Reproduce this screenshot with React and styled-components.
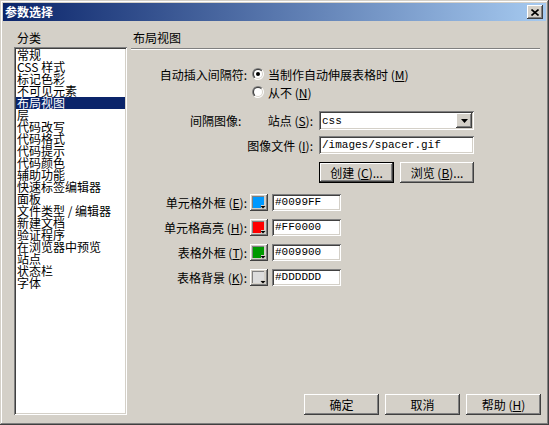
import React from 'react';
import styled, { createGlobalStyle } from 'styled-components';

const Global = createGlobalStyle`
  html, body { margin: 0; padding: 0; background: #D4D0C8; }
  body {
    font-family: "Noto Sans CJK SC", "Liberation Sans", sans-serif;
    font-size: 12px;
    color: #000;
  }
  * { box-sizing: border-box; }
  u { text-decoration: underline; text-underline-offset: 1px; }
`;

const raised = `
  box-shadow: inset -1px -1px #404040, inset 1px 1px #FFFFFF,
    inset -2px -2px #808080, inset 2px 2px #D4D0C8;
`;
const sunken = `
  box-shadow: inset 1px 1px #808080, inset -1px -1px #FFFFFF,
    inset 2px 2px #404040, inset -2px -2px #D4D0C8;
`;

const Window = styled.div`
  width: 549px;
  height: 425px;
  background: #D4D0C8;
  padding: 3px;
  display: flex;
  flex-direction: column;
  box-shadow: inset -1px -1px #404040, inset 1px 1px #D4D0C8,
    inset -2px -2px #808080, inset 2px 2px #FFFFFF;
`;

const TitleBar = styled.div`
  height: 18px;
  flex: none;
  display: flex;
  align-items: center;
  justify-content: space-between;
  padding: 0 3px 0 2px;
  background: linear-gradient(to right, #0A246A, #A6CAF0);
`;

const TitleText = styled.span`
  color: #fff;
  font-weight: bold;
  font-size: 12px;
  line-height: 14px;
`;

const CloseButton = styled.div`
  width: 16px;
  height: 14px;
  background: #D4D0C8;
  ${raised}
  display: flex;
  align-items: center;
  justify-content: center;
`;

const Client = styled.div`
  flex: 1;
  display: flex;
  padding: 10px 5px 7px 11px;
  gap: 4px;
  min-height: 0;
`;

const LeftCol = styled.div`
  width: 113px;
  flex: none;
  display: flex;
  flex-direction: column;
`;

const GroupLabel = styled.div`
  line-height: 14px;
  height: 14px;
  padding-left: ${p => p.$indent || 0}px;
`;

const ListBox = styled.div`
  margin-top: 2px;
  flex: 1;
  background: #fff;
  padding: 2px;
  ${sunken}
`;

const ListItem = styled.div`
  height: 12px;
  line-height: 12px;
  padding-left: 1px;
  white-space: pre;
  background: ${p => (p.$selected ? '#0A246A' : 'transparent')};
  color: ${p => (p.$selected ? '#fff' : '#000')};
`;

const RightCol = styled.div`
  flex: 1;
  display: flex;
  flex-direction: column;
`;

const Etched = styled.div`
  margin-top: 3px;
  margin-right: 1px;
  height: 2px;
  border-top: 1px solid #808080;
  border-bottom: 1px solid #FFFFFF;
`;

const Row = styled.div`
  display: flex;
  align-items: center;
  height: ${p => p.$h || 18}px;
  margin-top: ${p => p.$mt || 0}px;
  gap: ${p => p.$gap || 0}px;
  white-space: pre;
`;

const LabelCell = styled.div`
  width: ${p => p.$w}px;
  flex: none;
  display: flex;
  justify-content: ${p => p.$justify || 'flex-end'};
  padding-left: ${p => p.$pl || 0}px;
  white-space: pre;
`;

const RadioWrap = styled.div`
  display: flex;
  align-items: center;
  gap: 4px;
  margin-left: ${p => p.$ml || 0}px;
`;

const TextBox = styled.div`
  width: ${p => p.$w}px;
  height: ${p => p.$h}px;
  background: #fff;
  ${sunken}
  padding: 0 3px;
  display: flex;
  align-items: center;
  font-family: "Liberation Mono", "DejaVu Sans Mono", monospace;
  font-size: 11px;
  justify-content: space-between;
`;

const DropButton = styled.div`
  width: 16px;
  height: 15px;
  margin-right: -1px;
  background: #D4D0C8;
  ${raised}
  display: flex;
  align-items: center;
  justify-content: center;
`;

const Button = styled.div`
  width: ${p => p.$w || 75}px;
  height: 21px;
  background: #D4D0C8;
  display: flex;
  align-items: center;
  justify-content: center;
  white-space: pre;
  ${p =>
    p.$default
      ? `box-shadow: inset 0 0 0 1px #000, inset -2px -2px #404040, inset 2px 2px #FFFFFF, inset -3px -3px #808080;`
      : raised}
`;

const ButtonRow = styled.div`
  display: flex;
  gap: ${p => p.$gap || 6}px;
  margin-top: ${p => p.$mt || 0}px;
  margin-left: ${p => p.$ml || 0}px;
  justify-content: ${p => p.$justify || 'flex-start'};
`;

const Spacer = styled.div`
  flex: 1;
`;

const SwatchButton = styled.div`
  width: 18px;
  height: 17px;
  background: #D4D0C8;
  ${raised}
  padding: 2px;
  display: flex;
`;

const Radio = ({ checked }) => (
  <svg width="12" height="12" viewBox="0 0 12 12">
    <defs>
      <linearGradient id="rOut" x1="0" y1="0" x2="1" y2="1">
        <stop offset="0.5" stopColor="#808080" />
        <stop offset="0.5" stopColor="#FFFFFF" />
      </linearGradient>
      <linearGradient id="rIn" x1="0" y1="0" x2="1" y2="1">
        <stop offset="0.5" stopColor="#404040" />
        <stop offset="0.5" stopColor="#D4D0C8" />
      </linearGradient>
    </defs>
    <circle cx="6" cy="6" r="6" fill="url(#rOut)" />
    <circle cx="6" cy="6" r="5" fill="url(#rIn)" />
    <circle cx="6" cy="6" r="4" fill="#fff" />
    {checked && <circle cx="6" cy="6" r="2" fill="#000" />}
  </svg>
);

const Swatch = ({ color }) => (
  <SwatchButton>
    <svg width="14" height="13" viewBox="0 0 14 13">
      <path d="M0 0 H12 V9 H9 V12 H0 Z" fill="#808080" />
      <path d="M1 1 H12 V9 H9 V12 H1 Z" fill={color} />
      <path d="M8.5 10 H13.5 L11 12.5 Z" fill="#000" />
    </svg>
  </SwatchButton>
);

const items = [
  '常规', 'CSS 样式', '标记色彩', '不可见元素', '布局视图', '层', '代码改写',
  '代码格式', '代码提示', '代码颜色', '辅助功能', '快速标签编辑器', '面板',
  '文件类型 / 编辑器', '新建文档', '验证程序', '在浏览器中预览', '站点',
  '状态栏', '字体',
];

const colorRows = [
  { label: '单元格外框 ', key: 'E', color: '#0099FF', value: '#0099FF' },
  { label: '单元格高亮 ', key: 'H', color: '#FF0000', value: '#FF0000' },
  { label: '表格外框 ', key: 'T', color: '#009900', value: '#009900' },
  { label: '表格背景 ', key: 'K', color: '#DDDDDD', value: '#DDDDDD' },
];

export default function App() {
  return (
    <>
      <Global />
      <Window>
        <TitleBar>
          <TitleText>参数选择</TitleText>
          <CloseButton>
            <svg width="8" height="7" viewBox="0 0 8 7">
              <path d="M0.5 0.5 L7.5 6.5 M7.5 0.5 L0.5 6.5" stroke="#000" strokeWidth="1.6" />
            </svg>
          </CloseButton>
        </TitleBar>
        <Client>
          <LeftCol>
            <GroupLabel $indent={3}>分类</GroupLabel>
            <ListBox>
              {items.map((t, i) => (
                <ListItem key={t} $selected={i === 4}>{t}</ListItem>
              ))}
            </ListBox>
          </LeftCol>
          <RightCol>
            <GroupLabel $indent={2}>布局视图</GroupLabel>
            <Etched />
            <Row $h={16} $mt={16}>
              <LabelCell $w={116}>自动插入间隔符:</LabelCell>
              <RadioWrap $ml={5}>
                <Radio checked />
                <span>当制作自动伸展表格时 (<u>M</u>)</span>
              </RadioWrap>
            </Row>
            <Row $h={16} $mt={2}>
              <LabelCell $w={116} />
              <RadioWrap $ml={5}>
                <Radio />
                <span>从不 (<u>N</u>)</span>
              </RadioWrap>
            </Row>
            <Row $h={19} $mt={11} $gap={6}>
              <LabelCell $w={182} $pl={59} $justify="space-between">
                <span>间隔图像:</span>
                <span>站点 (<u>S</u>):</span>
              </LabelCell>
              <TextBox $w={155} $h={19}>
                <span>css</span>
                <DropButton>
                  <svg width="7" height="4" viewBox="0 0 7 4">
                    <path d="M0 0 H7 L3.5 4 Z" fill="#000" />
                  </svg>
                </DropButton>
              </TextBox>
            </Row>
            <Row $h={18} $mt={6} $gap={6}>
              <LabelCell $w={182}>图像文件 (<u>I</u>):</LabelCell>
              <TextBox $w={155} $h={18}>/images/spacer.gif</TextBox>
            </Row>
            <ButtonRow $mt={8} $ml={188}>
              <Button $default $w={75}>创建 (<u>C</u>)...</Button>
              <Button $w={74}>浏览 (<u>B</u>)...</Button>
            </ButtonRow>
            {colorRows.map((r, i) => (
              <Row key={r.key} $h={18} $mt={i === 0 ? 10 : 7}>
                <LabelCell $w={116}>
                  {r.label}(<u>{r.key}</u>):
                </LabelCell>
                <RadioWrap $ml={3}>
                  <Swatch color={r.color} />
                  <TextBox $w={69} $h={17}>{r.value}</TextBox>
                </RadioWrap>
              </Row>
            ))}
            <Spacer />
            <ButtonRow $justify="flex-end" $gap={6}>
              <Button>确定</Button>
              <Button>取消</Button>
              <Button>帮助 (<u>H</u>)</Button>
            </ButtonRow>
          </RightCol>
        </Client>
      </Window>
    </>
  );
}
